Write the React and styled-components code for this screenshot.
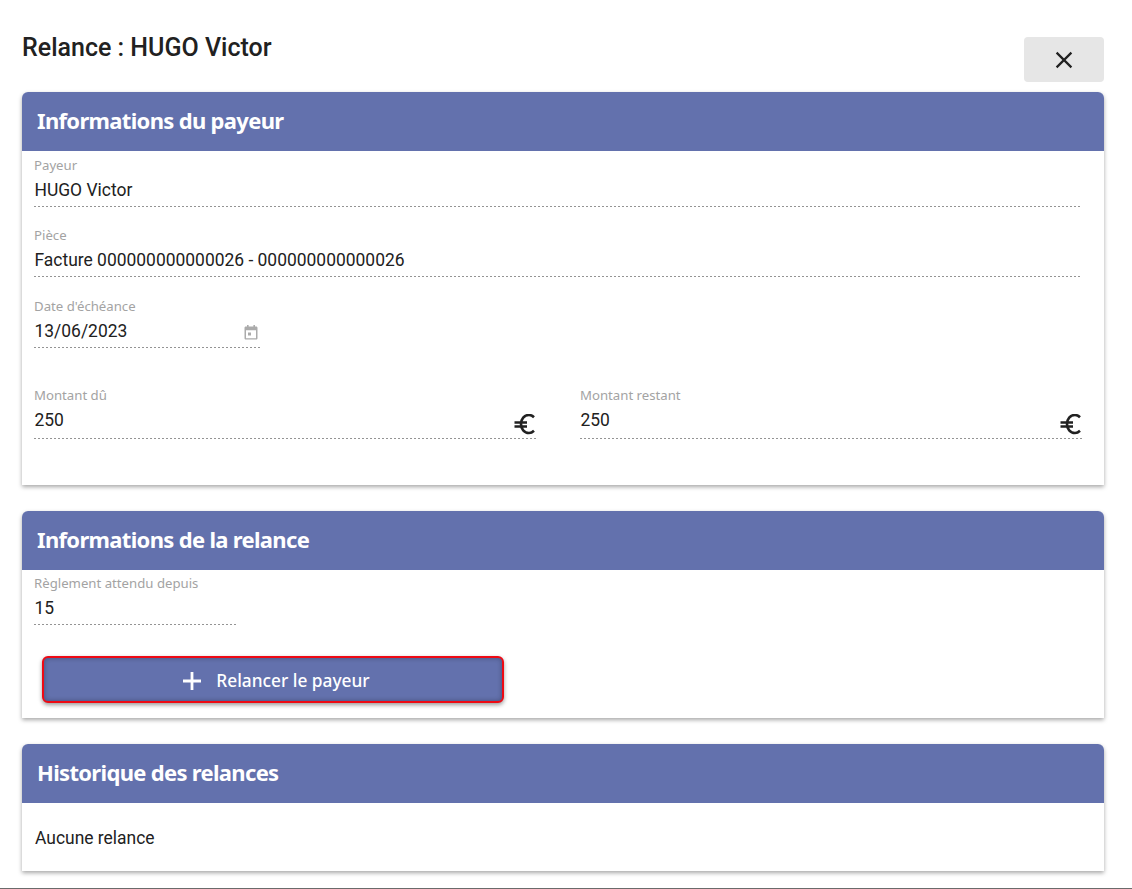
import React from "react";
import styled, { createGlobalStyle } from "styled-components";

const Global = createGlobalStyle`
  html, body { margin: 0; padding: 0; background: #fff; }
  body { font-family: Roboto, sans-serif; color: #212121; }
`;

const Page = styled.div`
  box-sizing: border-box;
  height: 889px;
  padding: 0 28px 0 22px;
  border-bottom: 1px solid #6b6b6b;
  overflow: hidden;
`;

const TopBar = styled.div`
  display: flex;
  justify-content: space-between;
  height: 92px;
`;

const Title = styled.h1`
  margin: 32px 0 0;
  font: 500 25px/32px Roboto, sans-serif;
  color: #212121;
`;

const CloseButton = styled.button`
  display: flex;
  align-items: center;
  justify-content: center;
  width: 80px;
  height: 45px;
  margin-top: 37px;
  padding: 0;
  border: 0;
  border-radius: 4px;
  background: #e6e6e6;
  color: #212121;
`;

const Card = styled.section`
  border-radius: 6px 6px 0 0;
  background: #fff;
  box-shadow: 0 2px 4px rgba(0, 0, 0, 0.35);
  height: ${(p) => p.$height}px;
  margin-bottom: 26px;
`;

const CardHeader = styled.h2`
  box-sizing: border-box;
  height: 59px;
  margin: 0;
  padding: 0 15px;
  border-radius: 6px 6px 0 0;
  background: #6371ad;
  color: #fff;
  font: 700 22px/57px "Noto Sans", sans-serif;
  letter-spacing: -0.68px;
`;

const Row = styled.div`
  display: flex;
  gap: 44px;
  padding: 0 22px 0 12px;
  margin-top: ${(p) => p.$top || 0}px;
`;

const Field = styled.div`
  box-sizing: border-box;
  position: relative;
  flex: ${(p) => (p.$width ? `0 0 ${p.$width}px` : "1 1 0")};
  height: ${(p) => p.$height || 56}px;
  padding-top: ${(p) => p.$pad ?? 6}px;
  background: linear-gradient(to right, rgba(0, 0, 0, 0.42) 50%, transparent 0) left bottom / 4px 1px repeat-x;
`;

const Label = styled.div`
  font: 400 13.2px/16px "Noto Sans", sans-serif;
  color: #a3a3a3;
`;

const Value = styled.div`
  margin-top: 5px;
  padding-left: 0.5px;
  font: 400 17.45px/24px Roboto, sans-serif;
  color: #212121;
`;

const Suffix = styled.span`
  position: absolute;
  right: 0;
  bottom: 3px;
  display: flex;
  color: #212121;
`;

const CalendarSlot = styled.span`
  position: absolute;
  right: 3px;
  bottom: 8px;
  display: flex;
  color: #ababab;
`;

const ActionButton = styled.button`
  box-sizing: border-box;
  display: flex;
  align-items: center;
  justify-content: center;
  gap: 14px;
  width: 462px;
  height: 47px;
  margin: 31px 0 0 20px;
  padding: 2px 0 0 6px;
  border: 2px solid #ee0a14;
  border-radius: 6px;
  background: #6371ad;
  color: #fff;
  font: 500 17.3px/24px "Noto Sans", sans-serif;
  box-shadow: inset 0 0 5px rgba(0, 0, 0, 0.3), 0 2px 4px rgba(0, 0, 0, 0.4);
`;

const EmptyText = styled.div`
  padding: 23px 13px 0;
  font: 400 17.45px/24px Roboto, sans-serif;
  color: #212121;
`;

const CloseIcon = () => (
  <svg width="24" height="24" viewBox="0 0 24 24" aria-hidden="true">
    <path d="M4.600 4.600 19.400 19.400M19.400 4.600 4.600 19.400" stroke="currentColor" strokeWidth="2.200" fill="none" />
  </svg>
);

const CalendarIcon = () => (
  <svg width="14" height="15" viewBox="0 0 14 15" aria-hidden="true">
    <path
      fill="currentColor"
      fillRule="evenodd"
      d="M3 0h1.600v1.600h4.800V0H11v1.600h1.200c.7 0 1.300.6 1.300 1.300v10.300c0 .7-.6 1.300-1.300 1.300H1.800c-.7 0-1.300-.6-1.300-1.300V2.900c0-.7.6-1.300 1.300-1.300H3V0ZM2 5.200v8h10v-8H2Zm2 2.300h3v3H4v-3Z"
    />
  </svg>
);

const EuroIcon = () => (
  <svg width="22" height="22" viewBox="0 0 22 22" aria-hidden="true">
    <path
      d="M20 3.200C18.500 1.800 16.800 1 15 1c-4.800 0-8 4-8 9s3.200 9 8 9c1.800 0 3.500-.8 5-2.200M.5 8.500H13M.5 12.500H13"
      stroke="currentColor"
      strokeWidth="2.600"
      fill="none"
    />
  </svg>
);

const PlusIcon = () => (
  <svg width="20" height="20" viewBox="0 0 20 20" aria-hidden="true">
    <path d="M10 1v18M1 10h18" stroke="currentColor" strokeWidth="2.800" fill="none" />
  </svg>
);

export default function App() {
  return (
    <Page>
      <Global />
      <TopBar>
        <Title>Relance : HUGO Victor</Title>
        <CloseButton aria-label="Fermer">
          <CloseIcon />
        </CloseButton>
      </TopBar>

      <Card $height={393}>
        <CardHeader>Informations du payeur</CardHeader>
        <Row>
          <Field>
            <Label>Payeur</Label>
            <Value>HUGO Victor</Value>
          </Field>
        </Row>
        <Row $top={14}>
          <Field>
            <Label>Pièce</Label>
            <Value>Facture 000000000000026 - 000000000000026</Value>
          </Field>
        </Row>
        <Row $top={15}>
          <Field $width={227}>
            <Label>Date d'échéance</Label>
            <Value>13/06/2023</Value>
            <CalendarSlot>
              <CalendarIcon />
            </CalendarSlot>
          </Field>
        </Row>
        <Row $top={35}>
          <Field $pad={4}>
            <Label>Montant dû</Label>
            <Value>250</Value>
            <Suffix>
              <EuroIcon />
            </Suffix>
          </Field>
          <Field $pad={4}>
            <Label>Montant restant</Label>
            <Value>250</Value>
            <Suffix>
              <EuroIcon />
            </Suffix>
          </Field>
        </Row>
      </Card>

      <Card $height={207}>
        <CardHeader>Informations de la relance</CardHeader>
        <Row>
          <Field $width={203} $height={55} $pad={5}>
            <Label>Règlement attendu depuis</Label>
            <Value>15</Value>
          </Field>
        </Row>
        <ActionButton>
          <PlusIcon />
          Relancer le payeur
        </ActionButton>
      </Card>

      <Card $height={127}>
        <CardHeader>Historique des relances</CardHeader>
        <EmptyText>Aucune relance</EmptyText>
      </Card>
    </Page>
  );
}
